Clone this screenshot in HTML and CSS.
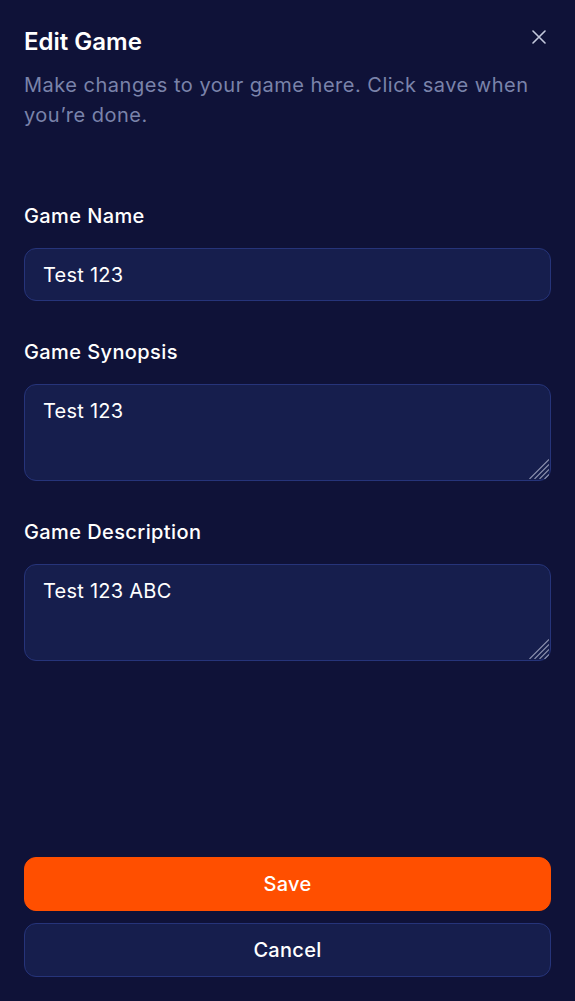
FILE: index.html
```html
<!DOCTYPE html>
<html>
<head>
<meta charset="utf-8">
<link rel="stylesheet" href="styles.css">
</head>
<body>
<div class="sheet">
  <div class="header">
    <h2 class="title">Edit Game</h2>
    <p class="desc">Make changes to your game here. Click save when you’re done.</p>
    <button class="close" aria-label="Close">
      <svg width="14" height="14" viewBox="0 0 14 14"><path d="M1 1L13 13M13 1L1 13" stroke="#c3c8dc" stroke-width="1.6" stroke-linecap="round"/></svg>
    </button>
  </div>
  <form class="form">
    <div class="field">
      <label class="label">Game Name</label>
      <input class="input" type="text" value="Test 123">
    </div>
    <div class="field">
      <label class="label">Game Synopsis</label>
      <div class="area-wrap">
        <textarea class="input area">Test 123</textarea>
        <svg class="grip" width="20" height="20" viewBox="0 0 20 20"><path d="M0.5 20L20 0.5M5.5 20L20 5.5M10.5 20L20 10.5M15.5 20L20 15.5" stroke="#8e93b0" stroke-width="1.1"/></svg>
      </div>
    </div>
    <div class="field">
      <label class="label">Game Description</label>
      <div class="area-wrap">
        <textarea class="input area">Test 123 ABC</textarea>
        <svg class="grip" width="20" height="20" viewBox="0 0 20 20"><path d="M0.5 20L20 0.5M5.5 20L20 5.5M10.5 20L20 10.5M15.5 20L20 15.5" stroke="#8e93b0" stroke-width="1.1"/></svg>
      </div>
    </div>
  </form>
  <div class="actions">
    <button class="btn save">Save</button>
    <button class="btn cancel">Cancel</button>
  </div>
</div>
</body>
</html>
```
FILE: styles.css
```css
* { box-sizing: border-box; }
html, body { margin: 0; padding: 0; background: #0f1238; }
body { font-family: Inter, "Liberation Sans", sans-serif; color: #fff; }
.sheet {
  height: 1001px;
  padding: 24px 24px 24px;
  display: flex;
  flex-direction: column;
}
.header { position: relative; }
.title { margin: 0; font-size: 24px; line-height: 36px; font-weight: 600; color: #fff; }
.desc { margin: 10px 0 0; font-size: 20px; line-height: 30px; color: #7a83aa; letter-spacing: 0.5px; }
.close {
  position: absolute; top: 6px; right: 5px;
  background: none; border: 0; padding: 0; width: 14px; height: 14px; cursor: pointer;
  display: block;
}
.close svg { display: block; }
.form { margin-top: 72px; display: flex; flex-direction: column; gap: 37px; }
.field { display: flex; flex-direction: column; gap: 18px; }
.label { font-size: 20px; line-height: 28px; font-weight: 500; color: #fff; letter-spacing: 0.4px; }
.input {
  font-family: inherit; font-size: 20px; line-height: 29px; color: #fff;
  background: #161e4d; border: 1px solid #26347a; border-radius: 12px;
  padding: 12px 18px 10px; width: 100%; outline: none; display: block;
  letter-spacing: 0.25px;
}
.area-wrap { position: relative; }
.area { height: 97px; resize: none; }
.grip { position: absolute; right: 2px; bottom: 2px; display: block; pointer-events: none; }
.actions { margin-top: auto; display: flex; flex-direction: column; gap: 12px; }
.btn {
  font-family: inherit; font-size: 20px; font-weight: 500; line-height: 28px;
  height: 54px; border-radius: 12px; width: 100%; cursor: pointer; color: #fff;
  letter-spacing: 0.3px;
}
.save { background: #ff4f00; border: 1px solid #ff4f00; }
.cancel { background: #161e4d; border: 1px solid #26347a; }
```
